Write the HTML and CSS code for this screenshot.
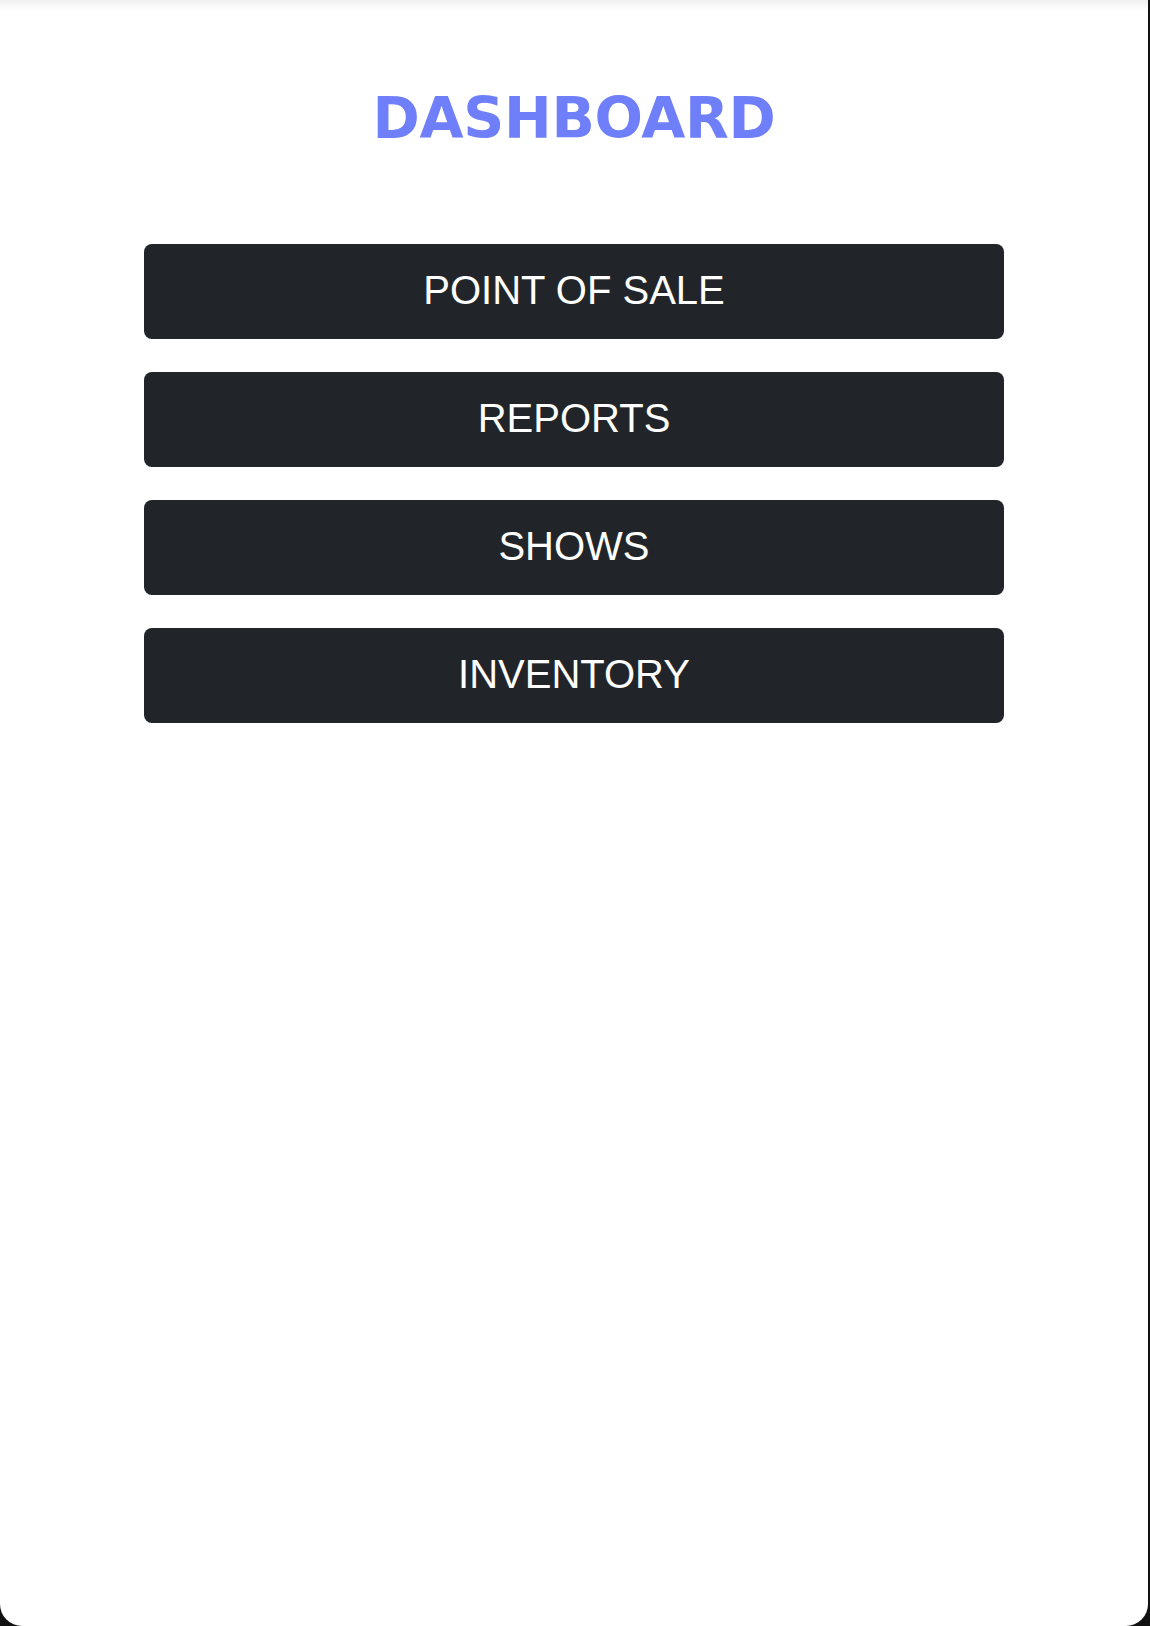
FILE: index.html
```html
<!DOCTYPE html>
<html lang="en">
<head>
    <meta charset="UTF-8">
    <meta name="viewport" content="width=device-width, initial-scale=1.0">
    <title>Dashboard</title>
    <link rel="stylesheet" href="styles.css">
</head>
<body>
    <div class="app">
        <h1 class="title">DASHBOARD</h1>

        <div class="menu">
            <a class="menu-btn" href="#">POINT OF SALE</a>
            <a class="menu-btn" href="#">REPORTS</a>
            <a class="menu-btn" href="#">SHOWS</a>
            <a class="menu-btn" href="#">INVENTORY</a>
        </div>
    </div>
</body>
</html>
```

FILE: styles.css
```css
html, body {
    margin: 0;
    padding: 0;
}
body {
    background-color: #111111;
    font-family: 'Liberation Sans', Arial, sans-serif;
}
.app {
    box-sizing: border-box;
    width: calc(100% - 2px);
    height: 1626px;
    padding-top: 90px;
    background-color: #ffffff;
    border-radius: 0 0 22px 22px;
    box-shadow: inset 0 12px 10px -8px rgba(0, 0, 0, 0.08); /* ombre en haut */
}
.title {
    margin: 0;
    text-align: center;
    font-family: 'DejaVu Sans', sans-serif;
    font-weight: bold;
    font-size: 57px;
    line-height: 1;
    letter-spacing: -0.3px;
    color: #6f7ffa;
}
.menu {
    display: flex;
    flex-direction: column;
    gap: 33px;
    width: 860px;
    margin: 97px auto 0;
}
.menu-btn {
    display: flex;
    align-items: center;
    justify-content: center;
    box-sizing: border-box;
    height: 95px;
    padding-bottom: 3px;
    background-color: #212529;
    color: #ffffff;
    border-radius: 8px;
    font-size: 40px;
    text-decoration: none;
}
.menu-btn:hover {
    background-color: #1a1e21;
}
```
